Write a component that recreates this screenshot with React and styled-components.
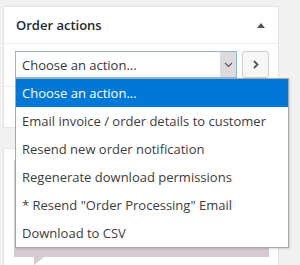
import React from "react";
import styled, { createGlobalStyle } from "styled-components";

const Global = createGlobalStyle`
  html, body { margin: 0; padding: 0; background: #f1f1f1; }
  body { font-family: "Open Sans", "Noto Sans", sans-serif; overflow: hidden; }
`;

const Page = styled.div`
  width: 276px;
  padding: 6px 0 0 3px;
  display: flex;
  flex-direction: column;
  gap: 20px;
`;

const Panel = styled.div`
  background: #fff;
  border: 1px solid #e5e5e5;
  box-sizing: border-box;
`;

const Header = styled.div`
  height: 36px;
  border-bottom: 1px solid #eee;
  display: flex;
  align-items: center;
  justify-content: space-between;
  padding: 0 13px 0 12px;
`;

const Title = styled.h2`
  margin: 0;
  font-size: 13px;
  font-weight: 600;
  color: #23282d;
`;

const Toggle = styled.span`
  width: 0;
  height: 0;
  border-left: 4px solid transparent;
  border-right: 4px solid transparent;
  border-bottom: 5px solid #555;
`;

const ActionRow = styled.div`
  position: relative;
  display: flex;
  gap: 5px;
  padding: 7px 9px 8px 11px;
`;

const Select = styled.div`
  position: relative;
  width: 222px;
  height: 27px;
  box-sizing: border-box;
  border: 1px solid #8fb6e2;
  display: flex;
  align-items: center;
  padding-left: 6px;
  font-size: 13px;
  color: #32373c;
`;

const Arrow = styled.span`
  position: absolute;
  right: 0;
  top: 0;
  bottom: 0;
  width: 16px;
  background: #dcdcdc;
  display: flex;
  align-items: center;
  justify-content: center;
`;

const GoButton = styled.button`
  width: 27px;
  height: 27px;
  box-sizing: border-box;
  border: 1px solid #ccc;
  border-radius: 3px;
  background: #f7f7f7;
  display: flex;
  align-items: center;
  justify-content: center;
  padding: 0;
`;

const Footer = styled.div`
  height: 40px;
  border-top: 1px solid #eee;
`;

const Menu = styled.ul`
  position: absolute;
  top: 34px;
  left: 11px;
  width: 274px;
  box-sizing: border-box;
  margin: 0;
  padding: 0;
  list-style: none;
  background: #fff;
  border: 1px solid #a8a8a8;
  box-shadow: 1px 1px 2px rgba(0, 0, 0, 0.15);
  z-index: 5;
`;

const Option = styled.li`
  height: 28px;
  display: flex;
  align-items: center;
  padding-left: 6px;
  font-size: 13px;
  color: ${(p) => (p.$active ? "#fff" : "#3c3c3c")};
  background: ${(p) => (p.$active ? "#0078d7" : "transparent")};
  white-space: nowrap;
`;

const Notes = styled.div`
  padding: 11px 9px 8px 10px;
`;

const Note = styled.div`
  position: relative;
  background: #d7cad2;
  height: 97px;
  &::after {
    content: "";
    position: absolute;
    left: 20px;
    bottom: -8px;
    width: 0;
    height: 0;
    border-style: solid;
    border-width: 8px 10px 0 0;
    border-color: #d7cad2 transparent;
  }
`;

const options = [
  "Choose an action...",
  "Email invoice / order details to customer",
  "Resend new order notification",
  "Regenerate download permissions",
  '* Resend "Order Processing" Email',
  "Download to CSV",
];

export default function App() {
  return (
    <>
      <Global />
      <Page>
        <Panel>
          <Header>
            <Title>Order actions</Title>
            <Toggle />
          </Header>
          <ActionRow>
            <Select>
              Choose an action...
              <Arrow>
                <svg width="9" height="6" viewBox="0 0 9 6">
                  <path d="M1 1 L4.5 4.5 L8 1" fill="none" stroke="#555" strokeWidth="1.2" />
                </svg>
              </Arrow>
            </Select>
            <GoButton aria-label="Apply">
              <svg width="6" height="9" viewBox="0 0 6 9">
                <path d="M1 1 L4.5 4.5 L1 8" fill="none" stroke="#555" strokeWidth="1.8" />
              </svg>
            </GoButton>
            <Menu>
              {options.map((o, i) => (
                <Option key={o} $active={i === 0}>
                  {o}
                </Option>
              ))}
            </Menu>
          </ActionRow>
          <Footer />
        </Panel>
        <Panel>
          <Notes>
            <Note />
          </Notes>
        </Panel>
      </Page>
    </>
  );
}
